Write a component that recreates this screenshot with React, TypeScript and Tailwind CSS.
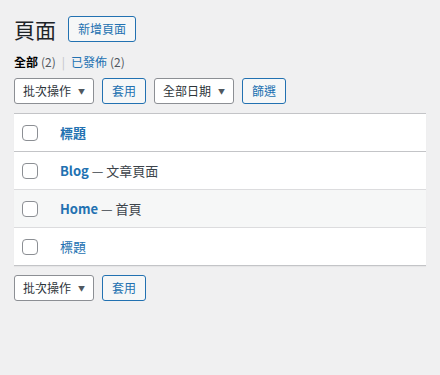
const font = { fontFamily: '"Noto Sans CJK TC", "Noto Sans", sans-serif' };

function Select({ label }: { label: string }) {
  return (
    <div className="flex h-[26px] w-[80px] items-center justify-between rounded-[3px] border border-[#8c8f94] bg-white pl-[8px] pr-[8px] text-[12px] text-[#2c3338]">
      <span>{label}</span>
      <span className="text-[7px] text-[#50575e]">▼</span>
    </div>
  );
}

function Btn({ label }: { label: string }) {
  return (
    <button className="flex h-[26px] items-center rounded-[3px] border border-[#2271b1] bg-[#f6f7f7] px-[9px] text-[12px] text-[#2271b1]">
      {label}
    </button>
  );
}

function Check() {
  return <span className="block h-[16px] w-[16px] rounded-[4px] border border-[#8c8f94] bg-white" />;
}

function Row({ children, className }: { children: React.ReactNode; className: string }) {
  return (
    <div className={`flex items-center border-[#dcdcde] ${className}`}>
      <div className="w-[46px] pl-[8px]">
        <Check />
      </div>
      <div className="text-[13px]">{children}</div>
    </div>
  );
}

export default function App() {
  return (
    <div className="min-h-[375px] bg-[#f0f0f1] px-[14px] pt-[15px]" style={font}>
      {/* Header */}
      <div className="flex items-center gap-[12px]">
        <h1 className="text-[21px] leading-[28px] text-[#1d2327]">頁面</h1>
        <button className="flex h-[26px] items-center rounded-[3px] border border-[#2271b1] bg-[#f6f7f7] px-[9px] text-[12px] text-[#2271b1]">
          新增頁面
        </button>
      </div>

      {/* Status links */}
      <div className="mt-[9px] flex items-center text-[12px] leading-[20px] text-[#50575e]">
        <span className="font-semibold text-[#000]">全部</span>
        <span className="ml-[3px]">(2)</span>
        <span className="mx-[6px] text-[#c3c4c7]">|</span>
        <span className="text-[#2271b1]">已發佈</span>
        <span className="ml-[3px]">(2)</span>
      </div>

      {/* Filters */}
      <div className="mt-[6px] flex items-center gap-[8px]">
        <Select label="批次操作" />
        <Btn label="套用" />
        <Select label="全部日期" />
        <Btn label="篩選" />
      </div>

      {/* Table */}
      <div className="mt-[9px] shadow-[0_1px_1px_rgba(0,0,0,0.04)]">
        <Row className="h-[39px] border-y border-t-[#c3c4c7] border-b-[#c3c4c7] bg-white">
          <span className="font-semibold text-[#2271b1]">標題</span>
        </Row>
        <Row className="h-[37px] bg-white">
          <span className="font-semibold text-[#2271b1]">Blog</span>
          <span className="text-[#3c434a]"> — 文章頁面</span>
        </Row>
        <Row className="h-[38px] border-t bg-[#f6f7f7]">
          <span className="font-semibold text-[#2271b1]">Home</span>
          <span className="text-[#3c434a]"> — 首頁</span>
        </Row>
        <Row className="h-[39px] border-y border-b-[#c3c4c7] bg-white">
          <span className="text-[#2271b1]">標題</span>
        </Row>
      </div>

      {/* Bottom actions */}
      <div className="mt-[9px] flex items-center gap-[8px]">
        <Select label="批次操作" />
        <Btn label="套用" />
      </div>
    </div>
  );
}
